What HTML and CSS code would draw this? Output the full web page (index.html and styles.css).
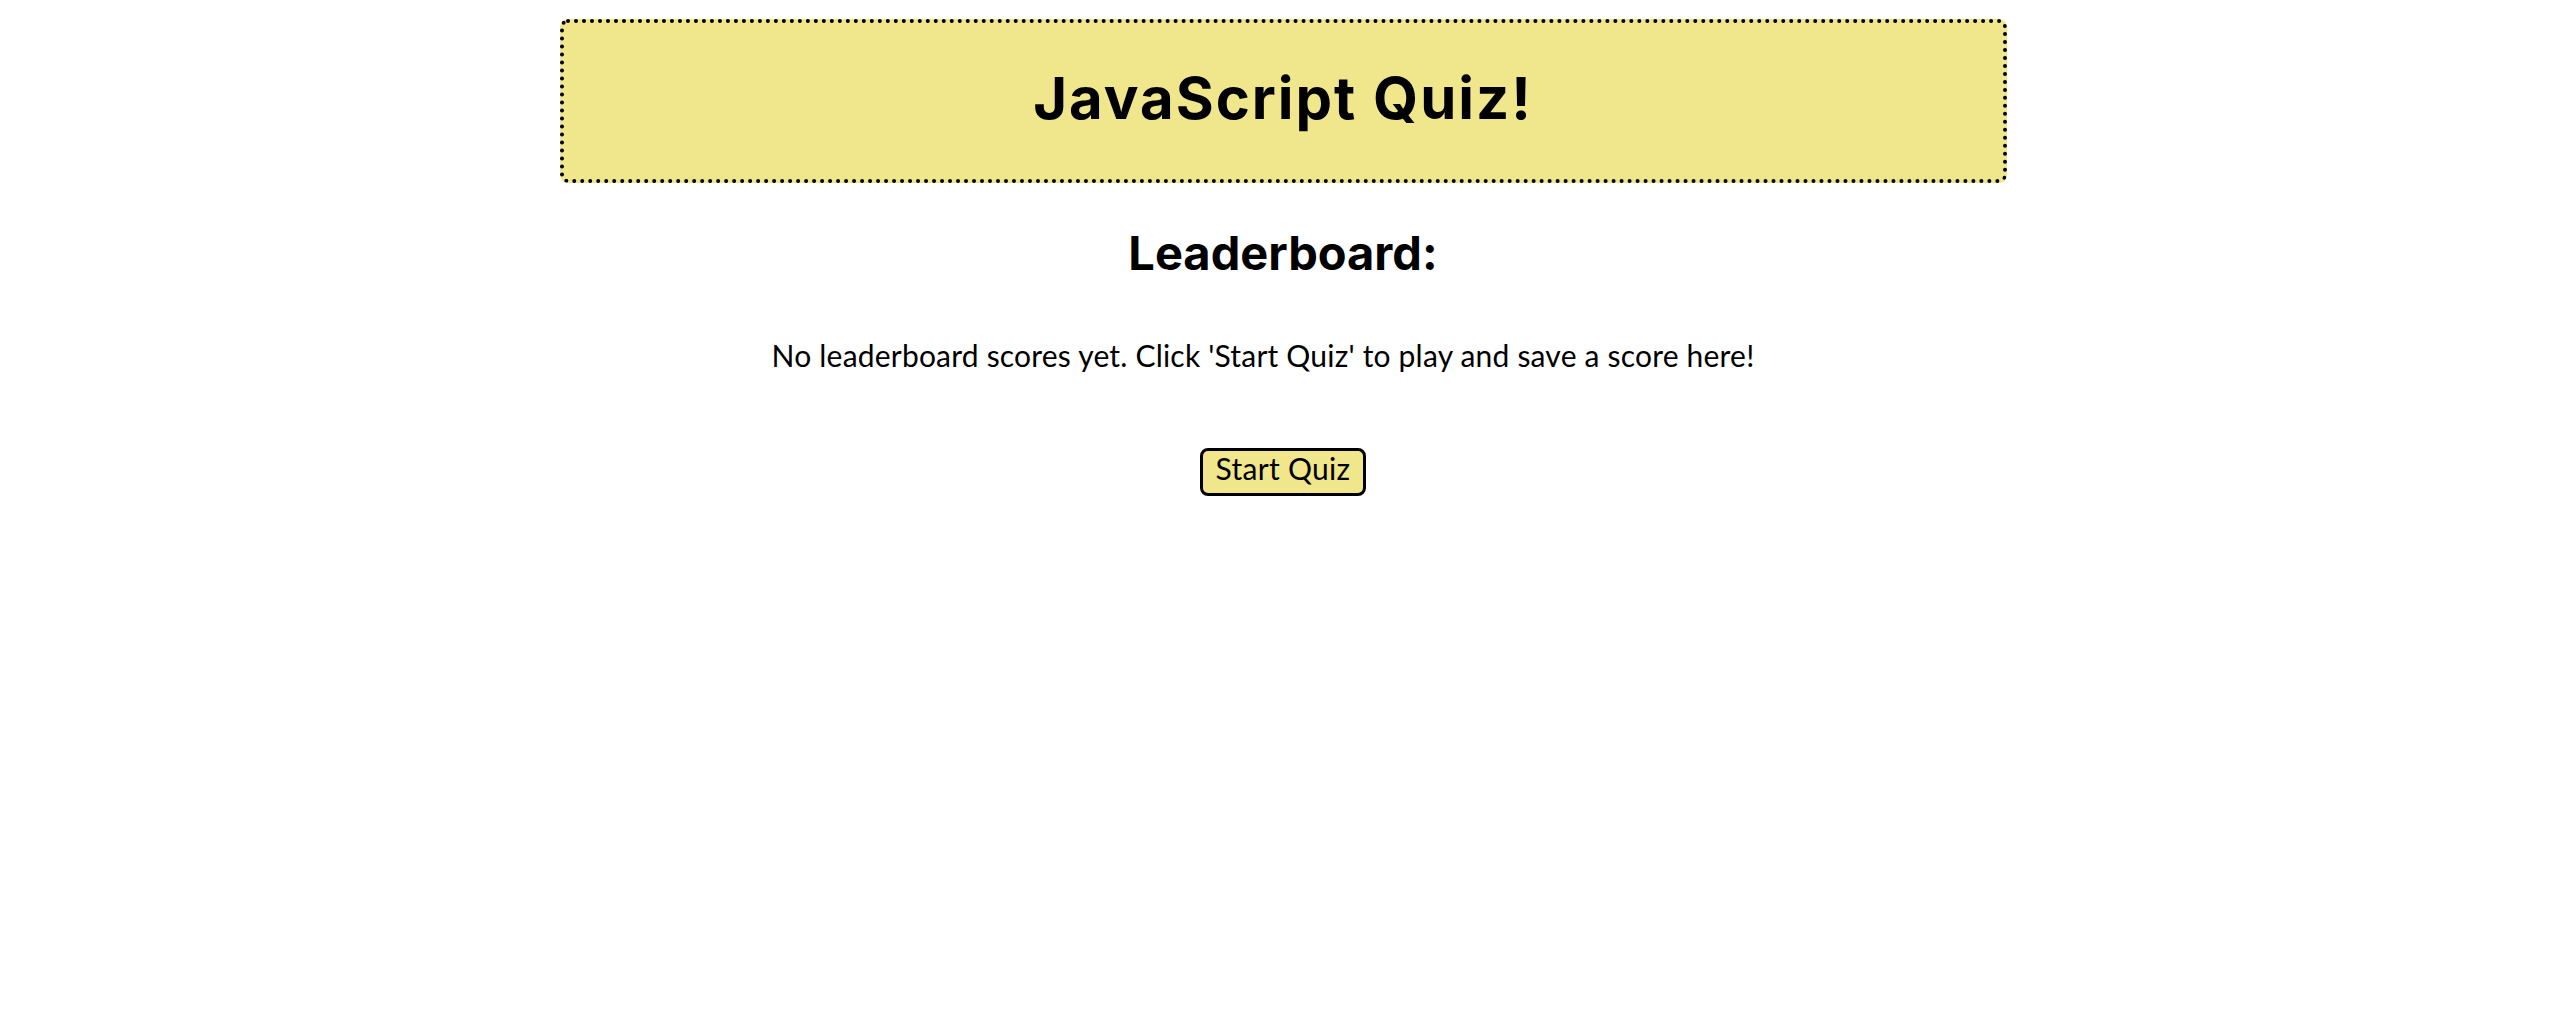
FILE: index.html
```html
<!DOCTYPE html>
<html lang="en">
<head>
<meta charset="utf-8">
<title>JavaScript Quiz!</title>
<link rel="stylesheet" href="styles.css">
</head>
<body>
<header class="banner">
  <h1 class="banner-title">JavaScript Quiz!</h1>
</header>
<main class="board">
  <h2 class="board-title">Leaderboard:</h2>
  <p class="board-empty">No leaderboard scores yet. Click 'Start Quiz' to play and save a score here!</p>
  <button class="start-btn" type="button">Start Quiz</button>
</main>
</body>
</html>
```
FILE: styles.css
```css
html, body {
  margin: 0;
  padding: 0;
  background: #ffffff;
  color: #000000;
}

body {
  padding-top: 19px;
}

.banner {
  box-sizing: border-box;
  width: 1447px;
  height: 164px;
  margin: 0 auto;
  padding: 42px 0 48px;
  background: #f0e68c;
  border: 4px dotted #000000;
  border-radius: 8px;
  text-align: center;
}

.banner-title {
  margin: 0;
  font-family: Inter, Roboto, "Liberation Sans", sans-serif;
  font-weight: 700;
  font-size: 58px;
  line-height: 66px;
  letter-spacing: 2px;
}

.board {
  display: flex;
  flex-direction: column;
  align-items: center;
  padding-top: 40px;
}

.board-title {
  margin: 0;
  font-family: Inter, Roboto, "Liberation Sans", sans-serif;
  font-weight: 700;
  font-size: 47px;
  line-height: 59px;
}

.board-empty {
  margin: 56px 0 0;
  padding-right: 40px;
  font-family: Lato, "Liberation Sans", sans-serif;
  font-size: 30px;
  line-height: 35px;
  letter-spacing: 0.2px;
}

.start-btn {
  margin-top: 75px;
  padding: 0 13px 8px;
  font-family: Lato, "Liberation Sans", sans-serif;
  font-size: 30px;
  line-height: 34px;
  letter-spacing: 0.3px;
  color: #000000;
  background: #f0e68c;
  border: 3px solid #000000;
  border-radius: 8px;
}
```
